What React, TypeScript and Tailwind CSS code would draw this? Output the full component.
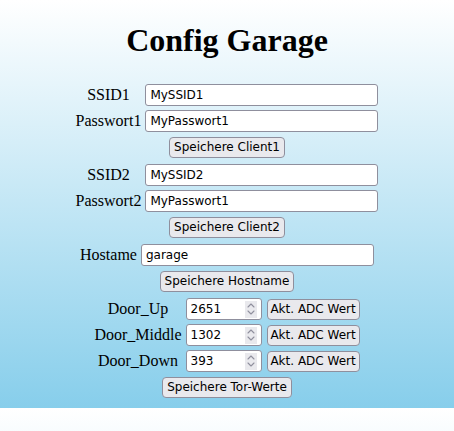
const serif = "font-['Liberation_Serif',serif]"
const ui = "font-['DejaVu_Sans',sans-serif] text-[12px] text-black"

const inputCls = `${ui} h-[22px] rounded-[3px] border border-[#8f8f9d] bg-white px-[4px] outline-none`
const btnCls = `${ui} h-[21px] whitespace-nowrap rounded-[4px] border border-[#8f8f9d] bg-[#e9e9ed] px-[4px] leading-none`

function Label({ children }: { children: string }) {
  return <span className={`${serif} text-center text-[16px] leading-[18px] text-black`}>{children}</span>
}

function Spinner() {
  return (
    <div className="mr-[4px] flex h-[17px] w-[12px] flex-col items-center justify-center bg-[#e9e9ed]">
      <svg width="8" height="14" viewBox="0 0 8 14" fill="none" stroke="#8f8f9d" strokeWidth="1.1" strokeLinecap="round" strokeLinejoin="round">
        <path d="M1 5 L4 2 L7 5" />
        <path d="M1 9 L4 12 L7 9" />
      </svg>
    </div>
  )
}

function NumberField({ value }: { value: string }) {
  return (
    <div className="flex h-[22px] w-[76px] items-center rounded-[3px] border border-[#8f8f9d] bg-white">
      <input defaultValue={value} className={`${ui} min-w-0 flex-1 bg-transparent px-[4px] outline-none`} />
      <Spinner />
    </div>
  )
}

function WifiGroup({ n, ssid, pass }: { n: number; ssid: string; pass: string }) {
  return (
    <div className="grid grid-cols-[auto_233px] auto-rows-[26px] items-center gap-x-[4px]">
      <Label>{`SSID${n}`}</Label>
      <input defaultValue={ssid} className={`${inputCls} w-full`} />
      <Label>{`Passwort${n}`}</Label>
      <input defaultValue={pass} className={`${inputCls} w-full`} />
      <div className="col-span-2 flex justify-center">
        <button className={btnCls}>{`Speichere Client${n}`}</button>
      </div>
    </div>
  )
}

const doors = [
  { name: 'Door_Up', value: '2651' },
  { name: 'Door_Middle', value: '1302' },
  { name: 'Door_Down', value: '393' },
]

export default function App() {
  return (
    <div className="min-h-[431px] bg-[linear-gradient(#ffffff,#87ceeb)] bg-[length:100%_408px] bg-repeat-y">
      <div className="flex flex-col items-center pt-[22px]">
        <h1 className={`${serif} h-[36px] text-[32px] font-bold leading-[36px] text-black`}>Config Garage</h1>

        <div className="mt-[24px] flex flex-col items-center gap-[2px]">
          <WifiGroup n={1} ssid="MySSID1" pass="MyPasswort1" />
          <WifiGroup n={2} ssid="MySSID2" pass="MyPasswort1" />

          <div className="grid grid-cols-[auto_233px] auto-rows-[26px] items-center gap-x-[4px]">
            <Label>Hostame</Label>
            <input defaultValue="garage" className={`${inputCls} w-full`} />
            <div className="col-span-2 flex justify-center">
              <button className={btnCls}>Speichere Hostname</button>
            </div>
          </div>

          <div className="grid grid-cols-[auto_auto_auto] auto-rows-[26px] items-center gap-x-[4px]">
            {doors.map((d) => (
              <div key={d.name} className="contents">
                <Label>{d.name}</Label>
                <NumberField value={d.value} />
                <button className={`${btnCls} ml-[1px] flex w-[93px] items-center justify-center px-0`}>Akt. ADC Wert</button>
              </div>
            ))}
            <div className="col-span-3 flex justify-center">
              <button className={btnCls}>Speichere Tor-Werte</button>
            </div>
          </div>
        </div>
      </div>
    </div>
  )
}
